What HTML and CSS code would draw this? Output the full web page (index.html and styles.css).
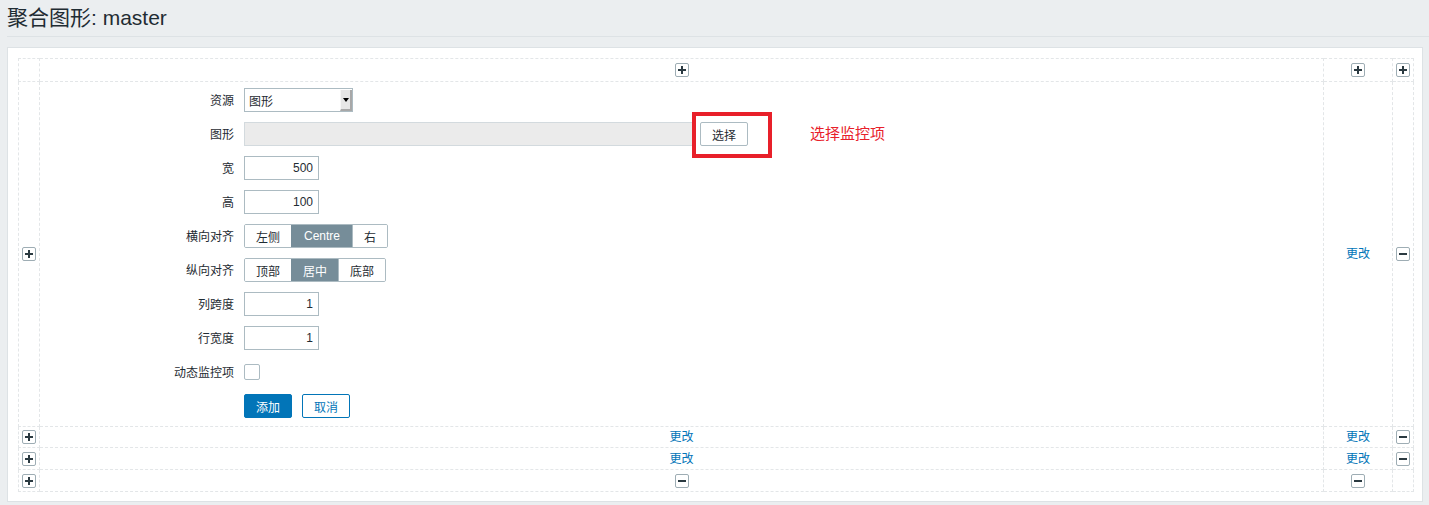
FILE: index.html
```
<!DOCTYPE html>
<html lang="zh">
<head>
<meta charset="utf-8">
<title>聚合图形: master</title>
<link rel="stylesheet" href="styles.css">
</head>
<body>
<header class="page-header">
  <h1 class="page-title">聚合图形: master</h1>
</header>
<main class="panel">
  <table class="screen-grid">
    <colgroup>
      <col class="c-edge">
      <col class="c-main">
      <col class="c-side">
      <col class="c-edge">
    </colgroup>
    <tr class="r-top">
      <td></td>
      <td class="ctr"><button class="tb plus" aria-label="add"></button></td>
      <td class="ctr"><button class="tb plus" aria-label="add"></button></td>
      <td class="ctr"><button class="tb plus" aria-label="add"></button></td>
    </tr>
    <tr class="r-form">
      <td class="ctr"><button class="tb plus" aria-label="add"></button></td>
      <td class="form-cell">
        <div class="form">
          <label class="lbl">资源</label>
          <div class="field">
            <div class="select"><span class="select-val">图形</span><span class="select-arrow"></span></div>
          </div>

          <label class="lbl">图形</label>
          <div class="field field-graph">
            <input class="inp inp-graph" type="text" readonly value="">
            <button class="btn-grey">选择</button>
          </div>

          <label class="lbl">宽</label>
          <div class="field"><input class="inp inp-num" type="text" value="500"></div>

          <label class="lbl">高</label>
          <div class="field"><input class="inp inp-num" type="text" value="100"></div>

          <label class="lbl">横向对齐</label>
          <div class="field">
            <div class="seg"><span class="seg-item">左侧</span><span class="seg-item on wide">Centre</span><span class="seg-item">右</span></div>
          </div>

          <label class="lbl">纵向对齐</label>
          <div class="field">
            <div class="seg"><span class="seg-item">顶部</span><span class="seg-item on">居中</span><span class="seg-item">底部</span></div>
          </div>

          <label class="lbl">列跨度</label>
          <div class="field"><input class="inp inp-num" type="text" value="1"></div>

          <label class="lbl">行宽度</label>
          <div class="field"><input class="inp inp-num" type="text" value="1"></div>

          <label class="lbl">动态监控项</label>
          <div class="field"><span class="checkbox"></span></div>

          <span class="lbl"></span>
          <div class="field actions">
            <button class="btn-primary">添加</button>
            <button class="btn-alt">取消</button>
          </div>
        </div>
        <div class="annot-box"></div>
        <div class="annot-text">选择监控项</div>
      </td>
      <td class="ctr"><a class="link" href="#">更改</a></td>
      <td class="ctr"><button class="tb minus" aria-label="remove"></button></td>
    </tr>
    <tr class="r-a">
      <td class="ctr"><button class="tb plus" aria-label="add"></button></td>
      <td class="ctr"><a class="link" href="#">更改</a></td>
      <td class="ctr"><a class="link" href="#">更改</a></td>
      <td class="ctr"><button class="tb minus" aria-label="remove"></button></td>
    </tr>
    <tr class="r-b">
      <td class="ctr"><button class="tb plus" aria-label="add"></button></td>
      <td class="ctr"><a class="link" href="#">更改</a></td>
      <td class="ctr"><a class="link" href="#">更改</a></td>
      <td class="ctr"><button class="tb minus" aria-label="remove"></button></td>
    </tr>
    <tr class="r-b">
      <td class="ctr"><button class="tb plus" aria-label="add"></button></td>
      <td class="ctr"><button class="tb minus" aria-label="remove"></button></td>
      <td class="ctr"><button class="tb minus" aria-label="remove"></button></td>
      <td></td>
    </tr>
  </table>
</main>
</body>
</html>
```

FILE: styles.css
```
* { box-sizing: border-box; }

html, body {
  margin: 0;
  padding: 0;
  background: #ebeef0;
  font-family: "Liberation Sans", Arial, "Noto Sans CJK SC", sans-serif;
  font-size: 12px;
  color: #1f2c33;
}

.page-header {
  margin: 0 0 0 7px;
  height: 37px;
  border-bottom: 1px solid #dde2e5;
  display: flex;
  align-items: center;
}

.page-title {
  margin: 0;
  font-size: 21px;
  font-weight: normal;
  color: #1f2c33;
  line-height: 1;
  position: relative;
  top: -1px;
}

.panel {
  margin: 10px 6px 0 7px;
  background: #fff;
  border: 1px solid #dde2e5;
  padding: 10px 8px 9px 10px;
}

.screen-grid {
  width: 100%;
  border-collapse: collapse;
  table-layout: fixed;
}

.screen-grid td {
  border: 1px dashed #e3e6e8;
  padding: 0;
  vertical-align: middle;
}

.c-edge { width: 21px; }
.c-side { width: 69px; }

.r-top td { height: 23px; }
.r-a td { height: 21px; }
.r-b td { height: 22px; }

.ctr { text-align: center; line-height: 12px; }

.tb {
  display: inline-block;
  width: 14px;
  height: 14px;
  padding: 0;
  margin: 0;
  border: 1px solid #9eadb4;
  border-radius: 2px;
  background: #fff;
  position: relative;
  vertical-align: middle;
  cursor: pointer;
}
.tb::before, .tb::after {
  content: "";
  position: absolute;
  background: #2b3a41;
}
.tb::before {
  left: 2px; width: 8px;
  top: 5px; height: 2px;
}
.plus::after {
  top: 2px; height: 8px;
  left: 5px; width: 2px;
}
.minus::after { display: none; }

.link {
  color: #0275b8;
  text-decoration: none;
}

.form-cell {
  position: relative;
}

.form {
  display: grid;
  grid-template-columns: 194px 1fr;
  column-gap: 10px;
  row-gap: 10px;
  padding: 6px 0 8px 0;
}

.lbl {
  display: flex;
  align-items: center;
  justify-content: flex-end;
  height: 24px;
  color: #1f2c33;
  padding-bottom: 1px;
}

.field {
  display: flex;
  align-items: center;
  height: 24px;
}

.select {
  width: 109px;
  height: 24px;
  border: 1px solid #acbbc2;
  display: flex;
  align-items: stretch;
  background: #fff;
}
.select-val {
  flex: 1;
  padding-left: 4px;
  display: flex;
  align-items: center;
}
.select-arrow {
  width: 12px;
  margin: 1px 0 0 0;
  background: #e6e6e6;
  border-left: 1px solid #f6f6f6;
  border-right: 2px solid #a8a8a8;
  border-bottom: 2px solid #a8a8a8;
  position: relative;
}
.select-arrow::after {
  content: "";
  position: absolute;
  left: 2px;
  top: 8px;
  border-left: 3px solid transparent;
  border-right: 3px solid transparent;
  border-top: 4px solid #000;
}

.inp {
  height: 24px;
  border: 1px solid #acbbc2;
  font: inherit;
  color: #1f2c33;
  padding: 0 5px;
  margin: 0;
  outline: none;
  background: #fff;
}
.inp-num {
  width: 75px;
  text-align: right;
}
.inp-graph {
  width: 450px;
  background: #ebebeb;
  border-color: #d3dade;
}

.btn-grey {
  margin-left: 6px;
  width: 48px;
  height: 24px;
  border: 1px solid #acbbc2;
  border-radius: 2px;
  background: #fff;
  font: inherit;
  color: #1f2c33;
  padding: 0;
}

.seg {
  display: flex;
  height: 24px;
  border: 1px solid #acbbc2;
  border-radius: 2px;
  overflow: hidden;
}
.seg-item {
  display: flex;
  align-items: center;
  justify-content: center;
  padding: 0 11px;
  color: #1f2c33;
  background: #fff;
}
.seg-item + .seg-item { border-left: 1px solid #acbbc2; }
.seg-item.wide { min-width: 61px; }
.seg-item.on {
  background: #768d99;
  color: #fff;
  border-color: #768d99;
}

.checkbox {
  display: inline-block;
  width: 16px;
  height: 16px;
  border: 1px solid #acbbc2;
  border-radius: 2px;
  background: #fff;
}

.actions { gap: 10px; }
.btn-primary, .btn-alt {
  width: 48px;
  height: 24px;
  border-radius: 2px;
  font: inherit;
  padding: 0;
}
.btn-primary {
  background: #0275b8;
  border: 1px solid #0275b8;
  color: #fff;
}
.btn-alt {
  background: #fff;
  border: 1px solid #0275b8;
  color: #0275b8;
}

.annot-box {
  position: absolute;
  left: 652px;
  top: 30px;
  width: 80px;
  height: 46px;
  border: 4px solid #e8202a;
  pointer-events: none;
}
.annot-text {
  position: absolute;
  left: 770px;
  top: 40px;
  font-size: 15px;
  color: #e8202a;
  white-space: nowrap;
}
```
